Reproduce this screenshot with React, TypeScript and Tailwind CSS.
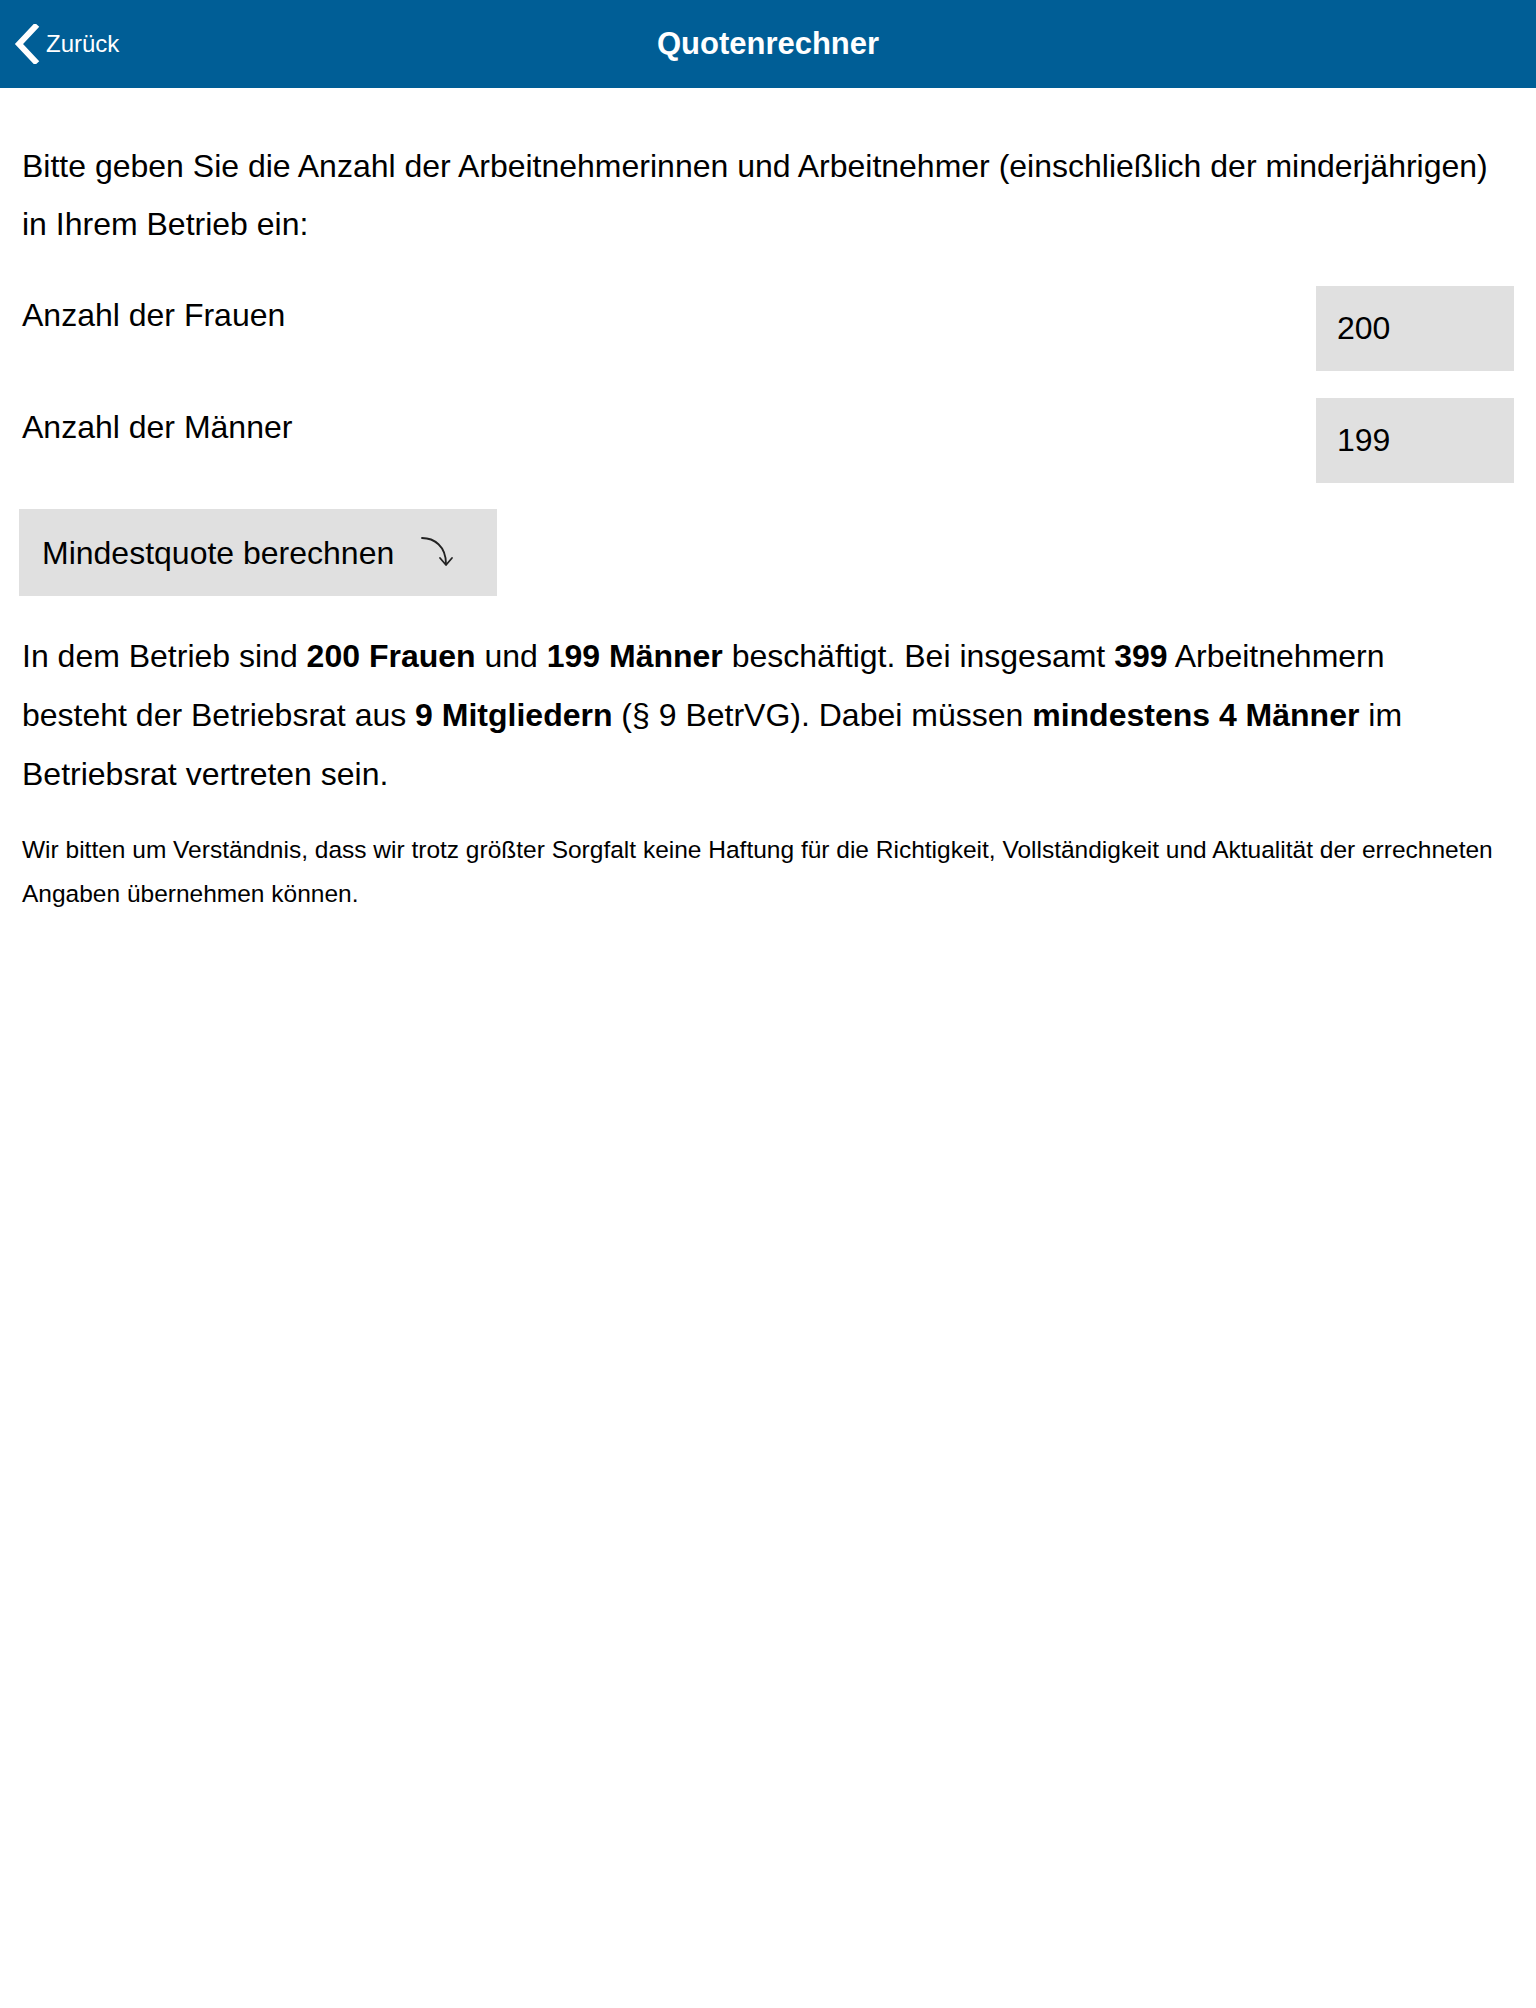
import React from 'react';

function BackChevron() {
  return (
    <svg width="26" height="40" viewBox="0 0 26 40" fill="none">
      <polyline points="21,3 5,20 21,37" stroke="white" strokeWidth="6" strokeLinecap="square" strokeLinejoin="miter" />
    </svg>
  );
}

function CurvedArrow() {
  return (
    <svg width="40" height="40" viewBox="0 0 40 40" fill="none">
      <path d="M4 5 C 16 5, 28 13, 28 31" stroke="#222" strokeWidth="1.8" strokeLinecap="round" />
      <path d="M22 25 L28 32 L34 25" stroke="#222" strokeWidth="1.8" strokeLinecap="round" strokeLinejoin="round" />
    </svg>
  );
}

interface NumberRowProps {
  label: string;
  value: string;
  className?: string;
}

function NumberRow({ label, value, className }: NumberRowProps) {
  return (
    <div className={'flex items-start justify-between ' + (className ?? '')}>
      <label className="leading-[58px]">{label}</label>
      <input
        type="text"
        defaultValue={value}
        className="w-[198px] h-[85px] bg-[#e0e0e0] pl-[21px] text-[32px] text-black outline-none"
      />
    </div>
  );
}

export default function App() {
  return (
    <div className="min-h-screen bg-white text-black font-['Liberation_Sans',Arial,sans-serif]">
      <header className="h-[88px] bg-[#005e96] grid grid-cols-[1fr_auto_1fr] items-center text-white">
        <button className="flex items-center gap-[6px] pl-[14px] justify-self-start">
          <BackChevron />
          <span className="text-[24px]">Zurück</span>
        </button>
        <h1 className="text-[31px] font-bold">Quotenrechner</h1>
        <div />
      </header>

      <main className="px-[22px] pt-[49px] text-[32px]">
        <p className="leading-[58px]">
          Bitte geben Sie die Anzahl der Arbeitnehmerinnen und Arbeitnehmer (einschließlich der minderjährigen) in Ihrem Betrieb ein:
        </p>

        <NumberRow label="Anzahl der Frauen" value="200" className="mt-[33px]" />
        <NumberRow label="Anzahl der Männer" value="199" className="mt-[27px]" />

        <button className="mt-[26px] -ml-[3px] w-[478px] h-[87px] bg-[#e0e0e0] flex items-center pl-[23px] gap-[24px]">
          <span>Mindestquote berechnen</span>
          <CurvedArrow />
        </button>

        <p className="mt-[31px] pr-[24px] leading-[59px]">
          In dem Betrieb sind <b>200 Frauen</b> und <b>199 Männer</b> beschäftigt. Bei insgesamt <b>399</b> Arbeitnehmern besteht der Betriebsrat aus <b>9 Mitgliedern</b> (§ 9 BetrVG). Dabei müssen <b>mindestens 4 Männer</b> im Betriebsrat vertreten sein.
        </p>

        <p className="mt-[24px] text-[24.5px] leading-[44px]">
          Wir bitten um Verständnis, dass wir trotz größter Sorgfalt keine Haftung für die Richtigkeit, Vollständigkeit und Aktualität der errechneten Angaben übernehmen können.
        </p>
      </main>
    </div>
  );
}
